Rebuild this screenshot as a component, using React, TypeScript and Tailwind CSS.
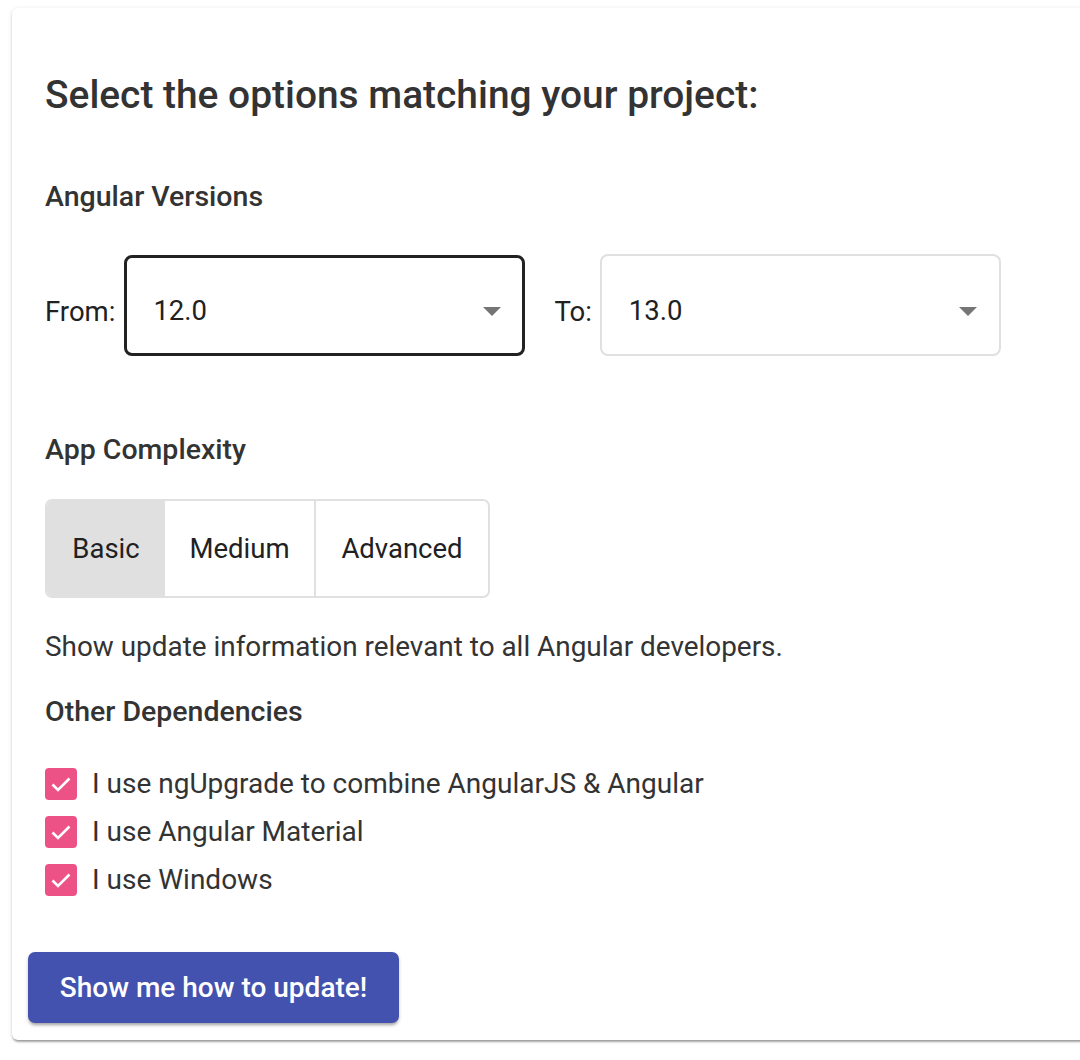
import React from "react";

function Arrow() {
  return (
    <svg width="18" height="9" viewBox="0 0 18 9" className="block">
      <polygon points="0,0 18,0 9,9" fill="#757575" />
    </svg>
  );
}

function Check() {
  return (
    <div className="w-[32px] h-[32px] rounded-[4px] bg-[#ec5286] flex items-center justify-center shrink-0">
      <svg width="24" height="24" viewBox="0 0 24 24">
        <path d="M3.5 12.5 L9 18 L20.5 6.5" fill="none" stroke="white" strokeWidth="2.6" />
      </svg>
    </div>
  );
}

export default function App() {
  const font = { fontFamily: "Roboto, 'Noto Sans', sans-serif" };
  return (
    <div className="w-[1080px] h-[1060px] bg-white overflow-hidden text-[#333333]" style={font}>
      <div className="ml-[12px] mt-[8px] w-[1090px] h-[1032px] bg-white rounded-[6px] shadow-[0_3px_2px_-1px_rgba(0,0,0,0.25),0_1px_2px_0_rgba(0,0,0,0.14),0_1px_5px_0_rgba(0,0,0,0.10)] pl-[33px] pt-[67px]">
        <h1 className="text-[38.9px] leading-[40px] font-medium text-[#333333] m-0">
          Select the options matching your project:
        </h1>

        <h3 className="mt-[66px] text-[28.5px] leading-[32px] font-medium">Angular Versions</h3>

        <div className="mt-[41px] flex items-center h-[102px]">
          <span className="text-[27.5px] mr-[9px] pt-[14px] text-[#212121]">From:</span>
          <div className="w-[401px] h-[101px] border-[3px] border-[#222222] rounded-[8px] flex items-center justify-between pl-[26px] pr-[21px] pt-[12px]">
            <span className="text-[27.5px] text-[#212121]">12.0</span>
            <Arrow />
          </div>
          <span className="text-[27.5px] ml-[29px] mr-[8px] pt-[14px] text-[#212121]">To:</span>
          <div className="w-[401px] h-[102px] border-[2px] border-[#e0e0e0] rounded-[8px] flex items-center justify-between pl-[27px] pr-[22px] pt-[12px]">
            <span className="text-[27.5px] text-[#212121]">13.0</span>
            <Arrow />
          </div>
        </div>

        <h3 className="mt-[78px] text-[28.5px] leading-[32px] font-medium">App Complexity</h3>

        <div className="mt-[33px] inline-flex h-[99px] border-[2px] border-[#e0e0e0] rounded-[7px] overflow-hidden text-[27.5px] text-[#212121]">
          <div className="w-[118px] bg-[#e0e0e0] flex items-center justify-center">Basic</div>
          <div className="w-[151px] border-r-[2px] border-[#e0e0e0] flex items-center justify-center">Medium</div>
          <div className="w-[172px] flex items-center justify-center">Advanced</div>
        </div>

        <p className="mt-[33px] text-[27.9px] leading-[32px]">
          Show update information relevant to all Angular developers.
        </p>

        <h3 className="mt-[33px] text-[28.5px] leading-[32px] font-medium">Other Dependencies</h3>

        <div className="mt-[32px] flex flex-col text-[28px]">
          {[
            "I use ngUpgrade to combine AngularJS & Angular",
            "I use Angular Material",
            "I use Windows",
          ].map((t) => (
            <div key={t} className="h-[48px] flex items-center">
              <Check />
              <span className="ml-[15px]">{t}</span>
            </div>
          ))}
        </div>

        <button className="mt-[48px] -ml-[17px] w-[371px] h-[71px] rounded-[7px] bg-[#4352af] text-white text-[28px] font-medium shadow-[0_3px_3px_-1px_rgba(0,0,0,0.25),0_2px_4px_0_rgba(0,0,0,0.15)]">
          Show me how to update!
        </button>
      </div>
    </div>
  );
}
